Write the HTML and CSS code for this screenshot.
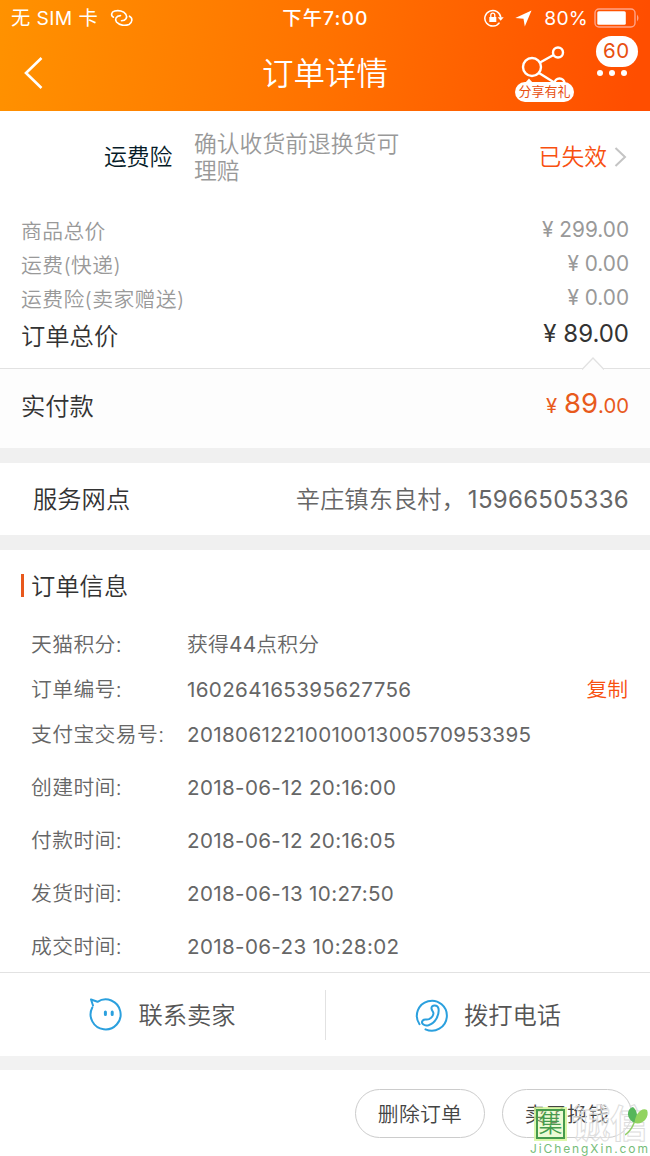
FILE: index.html
```html
<!DOCTYPE html>
<html lang="zh-CN">
<head>
  <meta charset="UTF-8" />
  <title>订单详情</title>
  <link rel="stylesheet" href="styles.css">
</head>
<body>
  <header class="header">
    <div class="status">
      <div class="status-left">
        <span>无 SIM 卡</span>
        <svg class="link-icon" width="24" height="18" viewBox="0 0 24 18" fill="none" stroke="#fff" stroke-width="1.6" stroke-linecap="round">
          <path d="M3.500 8.200C.5 6.500 1.200 3 4.700 2C8.500 1 13.500 1.800 15.800 5.200C17.800 8.500 15.800 11.800 11.500 11.800" />
          <path d="M19.500 7.200C23 9 22.500 13.500 19 15.500C15 17 9.500 16.500 6.500 13C4.500 10.200 6 6.800 10.500 6.600" />
        </svg>
      </div>
      <div class="status-time">下午7:00</div>
      <div class="status-right">
        <svg width="20" height="18" viewBox="0 0 20 18" fill="none" stroke="#fff" stroke-width="1.5">
          <path d="M15.500 13.600A8 7.800 0 1 1 16.800 8.500" />
          <path d="M13.700 8.200h6l-3 3.600z" fill="#fff" stroke="none" />
          <rect x="5.300" y="8" width="7" height="5" fill="#fff" stroke="none" />
          <path d="M6.800 8V6.200a2 2 0 0 1 4 0V8" stroke-width="1.300" />
        </svg>
        <svg class="nav-icon" width="17" height="17" viewBox="0 0 17 17" fill="#fff"><path d="M16.500.5L9.800 16.500L8.500 8.700L.3 8z" /></svg>
        <span class="percent">80%</span>
        <svg width="46" height="20" viewBox="0 0 46 20">
          <rect x="1" y="1" width="40" height="18" rx="4" fill="none" stroke="#ffa488" stroke-width="1.400" />
          <rect x="3.300" y="3.300" width="28.500" height="13.400" rx="1.500" fill="#fff" />
          <path d="M43 6.500q3 3.500 0 7z" fill="#ffa488" />
        </svg>
      </div>
    </div>
    <div class="navbar">
      <svg class="back" width="20" height="32" viewBox="0 0 20 32" fill="none" stroke="#fff" stroke-width="2.600"><path d="M17.500 1L2 16L17.500 31" /></svg>
      <h1>订单详情</h1>
      <div class="share">
        <svg width="60" height="56" viewBox="0 0 60 56" fill="none" stroke="#fff" stroke-width="2.400">
          <circle cx="17" cy="22" r="9" />
          <circle cx="43" cy="7.500" r="5" />
          <circle cx="44.500" cy="38.500" r="5" />
          <path d="M25 17.500L38.500 10M24 28L40 38" />
          <path d="M10 38l4-4.500l4 4.500z" fill="#fff" stroke="none" />
        </svg>
        <span class="share-tag">分享有礼</span>
      </div>
      <div class="more">
        <span class="badge">60</span>
        <span class="dots"><i></i><i></i><i></i></span>
      </div>
    </div>
  </header>

  <section class="insurance">
    <div class="insurance-name">运费险</div>
    <div class="insurance-text">确认收货前退换货可理赔</div>
    <div class="insurance-state">已失效</div>
    <svg width="13" height="20" viewBox="0 0 13 20" fill="none" stroke="#c4c4c4" stroke-width="2"><path d="M1.500 1L11 10L1.500 19" /></svg>
  </section>

  <section class="prices">
    <div class="price-row"><span>商品总价</span><span class="amount">¥ 299.00</span></div>
    <div class="price-row"><span>运费(快递)</span><span class="amount">¥ 0.00</span></div>
    <div class="price-row"><span>运费险(卖家赠送)</span><span class="amount">¥ 0.00</span></div>
    <div class="price-row total"><span>订单总价</span><span class="amount">¥ 89.00</span></div>
  </section>

  <section class="paid">
    <svg class="notch" width="22" height="13" viewBox="0 0 22 13"><path d="M0 12.500L11 1L22 12.500" fill="#fdfdfd" stroke="#e2e2e2" stroke-width="1.300" /></svg>
    <span>实付款</span>
    <span class="paid-amount"><small>¥</small> <b>89</b><small class="cents">.00</small></span>
  </section>

  <section class="service">
    <span class="service-name">服务网点</span>
    <span class="service-info">辛庄镇东良村，<span class="phone">15966505336</span></span>
  </section>

  <section class="order">
    <h2>订单信息</h2>
    <dl>
      <div class="row"><dt>天猫积分:</dt><dd>获得<span class="points">44</span>点积分</dd></div>
      <div class="row"><dt>订单编号:</dt><dd class="num">160264165395627756</dd><a class="copy">复制</a></div>
      <div class="row"><dt>支付宝交易号:</dt><dd class="num">2018061221001001300570953395</dd></div>
      <div class="row tall"><dt>创建时间:</dt><dd class="num">2018-06-12 20:16:00</dd></div>
      <div class="row tall"><dt>付款时间:</dt><dd class="num">2018-06-12 20:16:05</dd></div>
      <div class="row tall"><dt>发货时间:</dt><dd class="num">2018-06-13 10:27:50</dd></div>
      <div class="row tall"><dt>成交时间:</dt><dd class="num">2018-06-23 10:28:02</dd></div>
    </dl>
  </section>

  <section class="contact">
    <div class="contact-item">
      <svg width="34" height="34" viewBox="0 0 34 34" fill="none" stroke="#2ba0de" stroke-width="2" stroke-linecap="round" stroke-linejoin="round">
        <path d="M5 7.500L3 1.500L9.500 3.800A15 15 0 1 1 4.300 9.500" />
        <path d="M17.400 14v2.600M24.200 14v2.600" stroke-width="3" />
      </svg>
      <span>联系卖家</span>
    </div>
    <div class="contact-item">
      <svg width="34" height="34" viewBox="0 0 34 34" fill="none" stroke="#2ba0de" stroke-width="2" stroke-linecap="round" stroke-linejoin="round">
        <path d="M4.500 26.200A15 15 0 1 1 10.500 31.300" />
        <path d="M16.500 10.500C16 6.800 22.500 6 23.500 10.500C24.500 17 20.500 25 13.500 27.200C9 28.500 5.500 25.200 7.800 22.500C9.500 20.500 11.500 22.300 14 21.200C16.500 19.800 19 17 18.300 14.700C17.700 13 16.800 12.500 16.500 10.500z" />
      </svg>
      <span>拨打电话</span>
    </div>
  </section>

  <footer class="footer">
    <button type="button">删除订单</button>
    <button type="button">卖了换钱</button>
    <div class="watermark">
      <div class="mark-name">
        <span class="mark-box">集</span>
        <span class="mark-outline">诚信</span>
        <svg class="leaf" width="26" height="32" viewBox="0 0 26 32">
          <path d="M9.500 17C1 13 1 3 8 1C12.500 5 13.500 11 9.500 17z" fill="#56b65b" />
          <path d="M9.500 17C10 9 16 1 22 4C25 12 17 19.500 9.500 17z" fill="#92d35f" />
          <path d="M9.500 16Q6 25 0 29" fill="none" stroke="#92cf69" stroke-width="1.500" />
        </svg>
      </div>
      <div class="mark-url">JiChengXin.com</div>
    </div>
  </footer>
</body>
</html>
```

FILE: styles.css
```css
* {
  box-sizing: border-box;
}
body {
  margin: 0;
  width: 650px;
  height: 1156px;
  overflow: hidden;
  background: #fff;
  color: #333;
  font-family: Inter, "Noto Sans CJK SC", sans-serif;
  font-weight: 350;
  font-size: 20.8px;
}
h1, h2, dl, dd {
  margin: 0;
  font-weight: 350;
}
svg {
  display: block;
  flex: none;
}

/* header */
.header {
  height: 111px;
  background: linear-gradient(100deg, #ff9200 0%, #ff7200 50%, #ff4e00 97%);
  color: #fff;
}
.status {
  display: grid;
  grid-template-columns: 1fr auto 1fr;
  align-items: center;
  height: 36px;
  padding: 0 10px 0 11px;
  font-size: 19.300px;
  font-weight: 400;
  line-height: 32px;
}
.status-left, .status-right {
  display: flex;
  align-items: center;
}
.status-left {
  letter-spacing: 0.400px;
}
.status-left span, .status-time, .percent {
  margin-top: -1px;
}
.link-icon {
  margin-left: 12px;
}
.status-time {
  font-weight: 500;
  letter-spacing: 1.100px;
}
.status-right {
  justify-content: flex-end;
}
.nav-icon {
  margin: 0 12px 0 11px;
}
.percent {
  margin-right: 6px;
  letter-spacing: 0.200px;
}
.navbar {
  display: grid;
  grid-template-columns: 262px 253px 60px 1fr;
  height: 75px;
}
.back {
  margin: 21px 0 0 24px;
}
h1 {
  font-size: 31.500px;
  line-height: 76px;
}
.share {
  position: relative;
  padding-top: 9px;
}
.share-tag {
  position: absolute;
  left: 0;
  top: 46px;
  width: 59px;
  height: 20px;
  border-radius: 10px;
  background: #fff;
  color: #e84f10;
  font-size: 13px;
  font-weight: 400;
  line-height: 19px;
  text-align: center;
}
.more {
  display: flex;
  flex-direction: column;
  align-items: center;
  padding-right: 2px;
}
.badge {
  width: 42px;
  height: 31px;
  margin-left: 10px;
  border-radius: 16px;
  background: #fff;
  color: #e84f10;
  font-size: 20.500px;
  font-weight: 400;
  letter-spacing: 0.600px;
  line-height: 30px;
  text-align: center;
}
.dots {
  display: flex;
  gap: 6px;
  margin-top: 3px;
}
.dots i {
  width: 6px;
  height: 6px;
  border-radius: 50%;
  background: #fff;
}

/* freight insurance */
.insurance {
  display: flex;
  align-items: center;
  height: 92px;
  padding: 0 23px 1px 104px;
  font-size: 22.800px;
  line-height: 27px;
}
.insurance-name {
  width: 90px;
  color: #051b28;
}
.insurance-text {
  width: 210px;
  color: #999;
}
.insurance-state {
  margin: 0 7px 0 auto;
  color: #f8500f;
}

/* price list */
.prices {
  height: 165px;
  padding: 12px 21px 0;
}
.price-row {
  display: flex;
  justify-content: space-between;
  height: 34px;
  color: #999;
  line-height: 34px;
  letter-spacing: 0.400px;
}
.amount {
  margin-top: -2px;
  font-weight: 400;
  letter-spacing: 0;
}
.total {
  height: 38px;
  color: #333;
  font-size: 24.300px;
  line-height: 38px;
  letter-spacing: 0;
}
.total .amount {
  font-size: 24px;
}
.paid {
  position: relative;
  display: flex;
  justify-content: space-between;
  height: 80px;
  padding: 0 21px;
  border-top: 1px solid #e2e2e2;
  background: #fdfdfd;
  font-size: 24.300px;
  line-height: 74px;
}
.notch {
  position: absolute;
  left: 582px;
  top: -12px;
}
.paid-amount {
  color: #e85a1c;
  font-weight: 400;
  line-height: 68px;
}
.paid-amount b {
  font-size: 27.500px;
  font-weight: 400;
}
.paid-amount small {
  font-size: 20.300px;
}

/* service point */
.service {
  display: flex;
  justify-content: space-between;
  height: 102px;
  padding: 0 21px 0 33px;
  border: solid #f0f0f0;
  border-width: 15px 0;
  font-size: 24.300px;
  line-height: 73px;
}
.service-info {
  color: #666;
}
.phone {
  margin-left: 2px;
  font-size: 24px;
  font-weight: 400;
  letter-spacing: 0.300px;
}

/* order info */
.order {
  height: 422px;
  color: #666;
}
h2 {
  display: flex;
  align-items: center;
  height: 72px;
  padding: 0 0 3px 21px;
  color: #333;
  font-size: 24.300px;
}
h2::before {
  content: "";
  width: 3px;
  height: 23px;
  margin: 2px 7px 0 0;
  background: #e8581c;
}
.row {
  display: flex;
  height: 45px;
  padding: 0 22px 0 31px;
  line-height: 45px;
}
.tall {
  height: 53px;
  line-height: 61px;
}
dt {
  width: 156px;
  letter-spacing: 0.400px;
}
dd {
  letter-spacing: 0.200px;
}
.num {
  font-size: 20.600px;
  font-weight: 400;
  letter-spacing: 0.350px;
}
.points {
  font-weight: 400;
}
.copy {
  margin-left: auto;
  color: #f8500f;
}

/* contact bar */
.contact {
  display: flex;
  align-items: center;
  height: 84px;
  border-top: 1px solid #e2e2e2;
  color: #555;
  font-size: 24.300px;
}
.contact-item {
  display: flex;
  align-items: center;
  justify-content: center;
  gap: 16px;
  flex: 1;
  height: 50px;
  padding-right: 1px;
}
.contact-item span {
  margin-top: -2px;
}
.contact-item + .contact-item {
  gap: 15px;
  padding-right: 0;
  border-left: 1px solid #e2e2e2;
}

/* footer */
.footer {
  position: relative;
  display: flex;
  justify-content: flex-end;
  gap: 17px;
  height: 100px;
  padding: 19px 18px 0 0;
  border-top: 14px solid #f2f2f2;
}
button {
  width: 130px;
  height: 49px;
  padding: 0 0 2px;
  border: 1px solid #ccc;
  border-radius: 25px;
  background: #fff;
  color: #444;
  font: inherit;
  letter-spacing: 0.300px;
}
.watermark {
  position: absolute;
  left: 530px;
  top: 35px;
  width: 120px;
}
.mark-name {
  display: flex;
  align-items: center;
  gap: 7px;
  height: 37px;
}
.mark-box {
  width: 29px;
  height: 30px;
  margin-left: 6px;
  border: 2px solid #459b4d;
  outline: 2px solid rgba(210, 245, 150, 0.800);
  background: rgba(210, 245, 150, 0.400);
  color: #459b4d;
  font-size: 24px;
  line-height: 25px;
  text-align: center;
}
.mark-outline {
  color: rgba(255, 255, 255, 0.350);
  font-size: 38px;
  font-weight: 700;
  line-height: 37px;
  white-space: nowrap;
  -webkit-text-stroke: 1px #ddd;
}
.leaf {
  position: absolute;
  left: 95px;
  top: 1px;
}
.mark-url {
  color: #76bd79;
  font-size: 12px;
  font-weight: 400;
  line-height: 14px;
  letter-spacing: 1.900px;
}
```
